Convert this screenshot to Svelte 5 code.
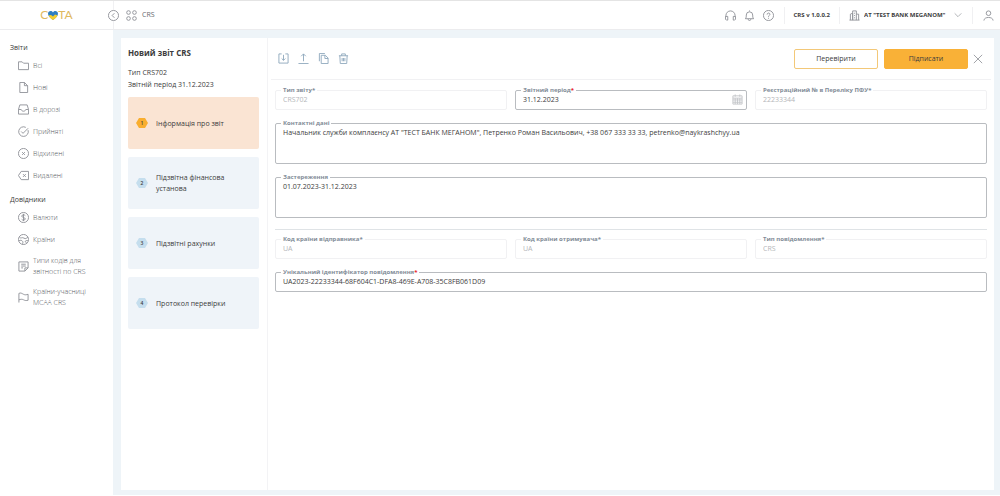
<script>
  let activeStep = $state(1);
  let bank = $state("meganom");

  const menu = [
    {
      title: "Звіти",
      items: [
        { label: "Всі", icon: "folder" },
        { label: "Нові", icon: "file" },
        { label: "В дорозі", icon: "inbox" },
        { label: "Прийняті", icon: "accepted" },
        { label: "Відхилені", icon: "rejected" },
        { label: "Видалені", icon: "deleted" },
      ],
    },
    {
      title: "Довідники",
      items: [
        { label: "Валюти", icon: "currency" },
        { label: "Країни", icon: "globe" },
        { label: "Типи кодів для звітності по CRS", icon: "note" },
        { label: "Країни-учасниці MCAA CRS", icon: "flag" },
      ],
    },
  ];

  const steps = [
    "Інформація про звіт",
    "Підзвітна фінансова установа",
    "Підзвітні рахунки",
    "Протокол перевірки",
  ];

  const tools = [
    { label: "Зберегти", icon: "save" },
    { label: "Експорт", icon: "upload" },
    { label: "Копіювати", icon: "copy" },
    { label: "Видалити", icon: "trash" },
  ];

  let report = $state({
    type: "CRS702",
    period: "31.12.2023",
    regNumber: "22233344",
    contact:
      'Начальник служби комплаєнсу АТ "ТЕСТ БАНК МЕГАНОМ", Петренко Роман Васильович, +38 067 333 33 33, petrenko@naykrashchyy.ua',
    warning: "01.07.2023-31.12.2023",
    sender: "UA",
    receiver: "UA",
    messageType: "CRS",
    messageId: "UA2023-22233344-68F604C1-DFA8-469E-A708-35C8FB061D09",
  });

  // all icons are drawn on a 24x24 grid
  const icons = {
    folder: "M1 4h8l3 3h11v14H1z",
    file: "M4 1h10l7 7v15H4zM14 1v7h7",
    inbox: "M4 2h16l3 10v10H1V12zM1 12h6c1 5 9 5 10 0h6",
    accepted: "M22 9a10.500 10.500 0 1 1-5-6M7 12l4 4 11-11",
    rejected: "M12 1a11 11 0 1 0 0 22a11 11 0 1 0 0-22M9 9l6 6M15 9l-6 6",
    deleted: "M7 3h16v18H7l-6-9zM11 9l6 6M17 9l-6 6",
    currency:
      "M12 1a11 11 0 1 0 0 22a11 11 0 1 0 0-22M16 8c-2-3-8-2-8 1s8 3 8 6-6 4-8 1M12 4v16",
    globe:
      "M12 1a11 11 0 1 0 0 22a11 11 0 1 0 0-22M3 7c4 4 6-1 10 2s6-1 9-2M2 15c3-2 6-2 8 1s-1 4 1 7M22 15c-3-2-7 0-6 2s3 1 3 3",
    note: "M2 2h20v13l-7 7H2zM22 15h-7v7M7 7h10M7 11h10M7 15h4",
    flag: "M2 23V3c4-2 6 0 10 2s6 1 10 0v13c-4 1-6 1-10-1s-6-1-10 0",
    collapse: "M12 1a11 11 0 1 0 0 22a11 11 0 1 0 0-22M14 7l-5 5 5 5",
    grid: "M5.500 1.500a4 4 0 1 0 0 8a4 4 0 1 0 0-8M18.500 1.500a4 4 0 1 0 0 8a4 4 0 1 0 0-8M5.500 14.500a4 4 0 1 0 0 8a4 4 0 1 0 0-8M18.500 14.500a4 4 0 1 0 0 8a4 4 0 1 0 0-8",
    support:
      "M2 15v-3a10 10 0 0 1 20 0v3M1 14h5v8H3l-2-2zM23 14h-5v8h3l2-2z",
    bell: "M12 1v2M3 19c2-2 2-5 2-8a7 7 0 0 1 14 0c0 3 0 6 2 8zM9 20c0 4 6 4 6 0",
    help: "M12 1a11 11 0 1 0 0 22a11 11 0 1 0 0-22M9 10c0-5 7-4 6 0-1 2-3 2-3 5M12 17v2",
    building: "M1 22h22M3 22V9l5-2v15M8 22V2h8v20M16 9h5v13M11 7h2M11 12h2M11 17h2",
    chevron: "M2 7l10 10L22 7",
    user: "M12 2a5 5 0 1 0 0 10a5 5 0 1 0 0-10M2 23c0-9 20-9 20 0",
    save: "M8 2H2v20h20V2h-6M12 4v12M8 12l4 4 4-4",
    upload: "M12 18V2M7 7l5-5 5 5M1 23h22",
    copy: "M7 5h9l6 6v12H7zM15 5v7h7M3 18V1h12",
    trash: "M2 6h20M4 6l1 17h14l1-17M8 6V2h8v4M9 11v7M15 11v7M12 11v7",
    calendar:
      "M2 4h20v18H2zM2 9h20M7 1v5M17 1v5M7 9v13M12 9v13M17 9v13M2 13h20M2 18h20",
    close: "M2 2l20 20M22 2L2 22",
  };
</script>

{#snippet icon(name)}
  <svg class="icon" viewBox="0 0 24 24" aria-hidden="true">
    <path d={icons[name]} />
  </svg>
{/snippet}

{#snippet field(id, label, required, disabled)}
  <div class="field" class:disabled>
    <label for={id}>{label}{#if required}<span class="star">*</span>{/if}</label>
    <input {id} type="text" {disabled} bind:value={report[id]} />
    {#if id === "period"}
      <button type="button" class="calendar" aria-label="Обрати дату">{@render icon("calendar")}</button>
    {/if}
  </div>
{/snippet}

<div class="app">
  <header>
    <div class="brand">
      <a class="logo" href="#home" aria-label="СОТА">
        <span>C</span>
        <svg viewBox="0 0 20 18" aria-hidden="true">
          <path fill="#2f7fc1" d="M10 18C5 14 0 10 0 5.500C0 0 7-2 10 3c3-5 10-3 10 2.500C20 10 15 14 10 18z" />
          <path fill="#f5cf2e" d="M1 9l5-1 4 3 4-4 5 2c-2 4-6 7-9 9-3-2-7-5-9-9z" />
        </svg>
        <span>TA</span>
      </a>
      <button class="collapse" aria-label="Згорнути меню">{@render icon("collapse")}</button>
    </div>
    <div class="crumb">
      {@render icon("grid")}
      <span>CRS</span>
    </div>
    <div class="actions">
      <button aria-label="Підтримка">{@render icon("support")}</button>
      <button aria-label="Сповіщення">{@render icon("bell")}</button>
      <button aria-label="Довідка">{@render icon("help")}</button>
    </div>
    <div class="version">CRS v 1.0.0.2</div>
    <div class="bank">
      {@render icon("building")}
      <select aria-label="Банк" bind:value={bank}>
        <option value="meganom">АТ "TEST BANK MEGANOM"</option>
      </select>
      <span class="arrow">{@render icon("chevron")}</span>
    </div>
    <div class="profile">
      <button aria-label="Профіль">{@render icon("user")}</button>
    </div>
  </header>

  <div class="body">
    <nav class="sidebar">
      {#each menu as group}
        <h2>{group.title}</h2>
        <ul>
          {#each group.items as item}
            <li>
              <a href="#{item.icon}">
                {@render icon(item.icon)}
                <span>{item.label}</span>
              </a>
            </li>
          {/each}
        </ul>
      {/each}
    </nav>

    <main>
      <section class="steps">
        <h1>Новий звіт CRS</h1>
        <p>Тип CRS702<br />Звітній період 31.12.2023</p>
        {#each steps as step, i}
          <button
            class="step"
            class:active={activeStep === i + 1}
            onclick={() => (activeStep = i + 1)}>
            <span class="number">{i + 1}</span>
            <span>{step}</span>
          </button>
        {/each}
      </section>

      <section class="content">
        <div class="toolbar">
          {#each tools as tool}
            <button class="tool" aria-label={tool.label}>{@render icon(tool.icon)}</button>
          {/each}
          <button class="btn outline">Перевірити</button>
          <button class="btn filled">Підписати</button>
          <button class="close" aria-label="Закрити">{@render icon("close")}</button>
        </div>

        <form>
          <div class="row">
            {@render field("type", "Тип звіту", true, true)}
            {@render field("period", "Звітний період", true, false)}
            {@render field("regNumber", "Реєстраційний № в Переліку ПФУ", true, true)}
          </div>
          <div class="field">
            <label for="contact">Контактні дані</label>
            <textarea id="contact" bind:value={report.contact}></textarea>
          </div>
          <div class="field">
            <label for="warning">Застереження</label>
            <textarea id="warning" bind:value={report.warning}></textarea>
          </div>
          <div class="row bordered">
            {@render field("sender", "Код країни відправника", true, true)}
            {@render field("receiver", "Код країни отримувача", true, true)}
            {@render field("messageType", "Тип повідомлення", true, true)}
          </div>
          {@render field("messageId", "Унікальний ідентифікатор повідомлення", true, false)}
        </form>
      </section>
    </main>
  </div>
</div>

<style>
  :global(body) {
    background: #fff;
  }

  .app {
    box-sizing: border-box;
    display: flex;
    flex-direction: column;
    min-height: 100vh;
    padding-bottom: 1px;
    border-top: 1px solid #e4e4e4;
    font-family: "Open Sans", "Noto Sans", sans-serif;
    font-size: 7px;
    line-height: 12px;
    color: #3c3c3c;
  }

  button,
  input,
  select,
  textarea {
    box-sizing: border-box;
    margin: 0;
    padding: 0;
    border: none;
    background: none;
    font: inherit;
    color: inherit;
  }

  button {
    cursor: pointer;
  }

  .icon {
    display: block;
    flex: none;
    width: 11px;
    height: 11px;
    fill: none;
    stroke: #8f9298;
    stroke-width: 2;
    stroke-linejoin: round;
  }

  header {
    display: flex;
    align-items: center;
    height: 29px;
    border-bottom: 1px solid #ececee;
    box-sizing: border-box;
  }

  .brand {
    position: relative;
    display: flex;
    align-items: center;
    justify-content: center;
    box-sizing: border-box;
    width: 114px;
    height: 100%;
    border-right: 1px solid #f0f0f2;
  }

  .logo {
    display: flex;
    align-items: center;
    font-family: Lato, sans-serif;
    font-size: 12px;
    font-weight: 400;
    color: #dfb95f;
    text-decoration: none;
  }

  .logo svg {
    width: 10px;
    height: 9px;
  }

  .collapse {
    position: absolute;
    right: -6px;
    background: #fff;
    border-radius: 50%;
  }

  .crumb {
    display: flex;
    align-items: center;
    gap: 5px;
    margin-right: auto;
    padding-left: 12px;
    font-weight: 500;
    color: #66696e;
  }

  .actions {
    display: flex;
    gap: 8px;
    padding-right: 10px;
  }

  .version,
  .bank,
  .profile {
    display: flex;
    align-items: center;
    height: 17px;
    border-left: 1px solid #f0f0f2;
    font-size: 6px;
    font-weight: 700;
  }

  .version {
    padding: 0 9px;
  }

  .bank {
    position: relative;
    gap: 4px;
    padding: 0 10px 0 9px;
  }

  .bank select {
    appearance: none;
    padding-right: 16px;
  }

  .bank .arrow {
    position: absolute;
    right: 10px;
    pointer-events: none;
  }

  .arrow .icon {
    width: 8px;
    height: 8px;
  }

  .profile {
    padding: 0 6px 0 10px;
  }

  .body {
    display: flex;
    flex: 1;
  }

  .sidebar {
    box-sizing: border-box;
    flex: none;
    width: 113px;
    padding: 12px 10px 0;
  }

  .sidebar h2 {
    margin: 0 0 5px;
    font-size: 7px;
    font-weight: 500;
  }

  .sidebar ul {
    display: flex;
    flex-direction: column;
    gap: 9px;
    margin: 0 0 12px;
    padding: 0 0 0 8px;
    list-style: none;
  }

  .sidebar a {
    display: flex;
    align-items: center;
    gap: 4px;
    min-height: 13px;
    line-height: 11px;
    font-weight: 300;
    color: #55585e;
    text-decoration: none;
  }

  main {
    display: flex;
    flex: 1;
    min-width: 0;
    background: #fff;
    border: 8px solid #eef4f8;
    border-width: 8px 6px 5px 8px;
  }

  .steps {
    display: flex;
    flex-direction: column;
    gap: 8px;
    box-sizing: border-box;
    flex: none;
    width: 147px;
    padding: 8px 8px 0 7px;
    border-right: 1px solid #f3f3f5;
  }

  .steps h1 {
    margin: 0;
    font-size: 8px;
    line-height: 13px;
    font-weight: 700;
  }

  .steps p {
    margin: 0 0 -2px;
    line-height: 12px;
  }

  .step {
    display: flex;
    align-items: center;
    gap: 8px;
    height: 52px;
    padding: 0 8px;
    border-radius: 2px;
    background: #eff4f9;
    line-height: 11px;
    text-align: left;
  }

  .number {
    flex: none;
    width: 12px;
    height: 10px;
    background: #c5deee;
    clip-path: polygon(25% 0, 75% 0, 100% 50%, 75% 100%, 25% 100%, 0 50%);
    font-size: 5px;
    line-height: 10px;
    font-weight: 600;
    text-align: center;
  }

  .step.active {
    background: #fae4d3;
  }

  .active .number {
    background: #f9ae2f;
  }

  .content {
    flex: 1;
    min-width: 0;
    padding: 0 3px;
  }

  .toolbar {
    display: flex;
    align-items: center;
    height: 42px;
    padding: 0 8px 0 7px;
    border-bottom: 1px solid #f1f1f3;
    box-sizing: border-box;
  }

  .tool {
    margin-right: 9px;
  }

  .tool .icon {
    stroke: #8fa9bd;
  }

  .btn {
    width: 84px;
    height: 20px;
    margin-right: 6px;
    border: 1px solid #f3c878;
    border-radius: 2px;
  }

  .outline {
    margin-left: auto;
  }

  .filled {
    margin-right: 5px;
    border-color: #f9b137;
    background: #f9b137;
  }

  .close .icon {
    width: 10px;
    height: 10px;
  }

  form {
    display: flex;
    flex-direction: column;
    gap: 13px;
    padding: 10px 4px;
  }

  .row {
    display: grid;
    grid-template-columns: repeat(3, 1fr);
    gap: 8px;
  }

  .bordered {
    margin-top: -2px;
    padding-top: 9px;
    border-top: 1px solid #dfe3e6;
  }

  .field {
    position: relative;
    display: flex;
  }

  /* the label sits on the top border of its field */
  .field label {
    position: absolute;
    top: -3px;
    left: 6px;
    padding: 0 2px;
    background: #fff;
    font-size: 6px;
    line-height: 7px;
    font-weight: 700;
    color: #828c97;
  }

  .star {
    color: #e8202a;
  }

  .disabled .star {
    color: inherit;
  }

  .field input,
  .field textarea {
    flex: 1;
    min-width: 0;
    padding: 0 7px;
    border: 1px solid #b9bcc0;
    border-radius: 2px;
    resize: none;
  }

  .field input {
    height: 20px;
    padding-bottom: 1px;
  }

  .field textarea {
    height: 41px;
    padding-top: 3px;
    overflow: hidden;
  }

  .field.disabled input {
    border-color: #f1f1f3;
    color: #b4b6b9;
  }

  .calendar {
    position: absolute;
    top: 4px;
    right: 4px;
  }

  .calendar .icon {
    stroke: #c4c6c9;
  }
</style>
